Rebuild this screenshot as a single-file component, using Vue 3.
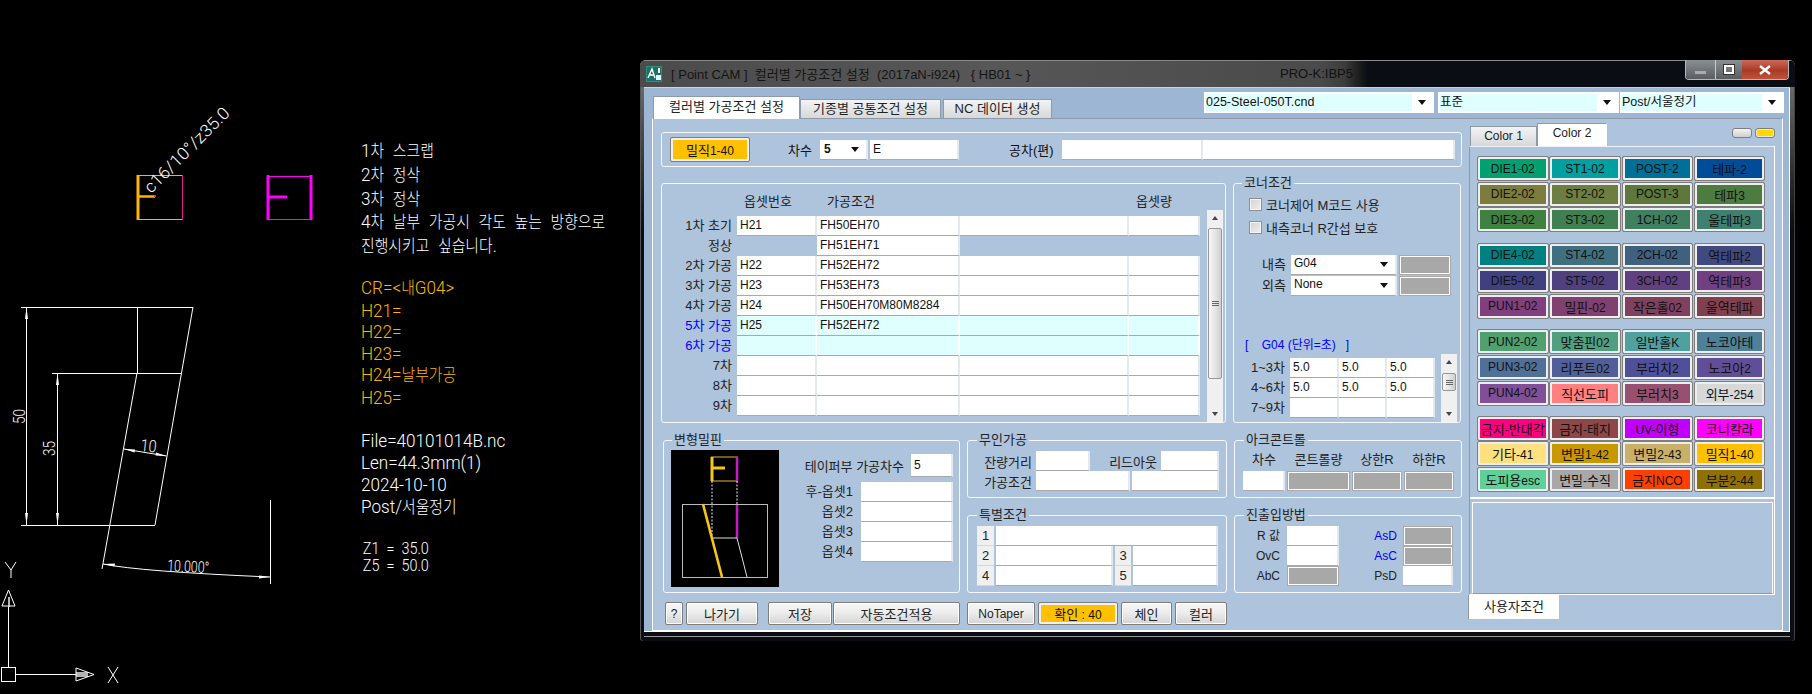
<template>
  <div class="desktop">
    <!-- CAD 도면 -->
    <svg class="cad" width="640" height="694" viewBox="0 0 640 694">
      <g fill="none" stroke="#ffb400">
        <path d="M137 175.500h45M137 219.500h45" />
        <path d="M138 175v45" stroke-width="3" />
        <path d="M137 196.500h18" stroke-width="2.500" />
      </g>
      <path d="M182.500 175v45" stroke="#e0208a" fill="none" />
      <rect x="154" y="195" width="2" height="2" fill="#ff2020" />
      <text class="cad-t" transform="translate(151 194) rotate(-45)" font-size="17" textLength="113" lengthAdjust="spacingAndGlyphs">c16/10°/z35.0</text>

      <g fill="none" stroke="#ff00ff">
        <path d="M267 176.500h45M267 219.500h45" />
        <path d="M268 175v45M311 175v45" stroke-width="3" />
        <path d="M267 197h20" stroke-width="3" />
      </g>

      <g fill="none" stroke="#fff">
        <path d="M21 307.500h172M137.500 307v66M52 373.500h129M21 525.500h134" />
        <path d="M193 307 155 525M137 373 102 569" />
        <path d="M26.500 307v218M57.500 373v152" />
        <path d="M124 449 166.500 456" />
        <path d="M103 564Q140 571.500 270 577" />
        <path d="M270.500 500v84" />
        <rect x="1.500" y="667.500" width="14" height="14" />
        <path d="M15.500 674.500H76M8.500 667V607" />
        <path d="M76 668v13l18-6.500zM2 606h13l-6.500-16z" />
        <path d="M108 667l10 16M118 667l-10 16M5 562l6 8 5-8M11 570v8" />
      </g>
      <g fill="#fff">
        <path d="M26.500 307 28 319h-3zM26.500 525 28 513h-3zM57.500 373 59 385h-3zM57.500 525 59 513h-3z" />
        <path d="M124 449l11 .5-.5 3zM166.500 456l-11-.5.500-3zM103 564l12-.5-.5 3zM270 577l-11 1.500v-3z" />
        <path d="M76 672h12v5H76zM8 607v-10h2v10z" opacity=".7" />
      </g>
      <text class="cad-t" transform="translate(25 424) rotate(-90) scale(.85 1)" font-size="16">50</text>
      <text class="cad-t" transform="translate(55 456) rotate(-90) scale(.85 1)" font-size="16">35</text>
      <text class="cad-t" transform="translate(140 451) rotate(6) scale(.85 1)" font-size="17">10</text>
      <text class="cad-t" transform="translate(167 571) rotate(3)" font-size="16" textLength="42" lengthAdjust="spacingAndGlyphs">10.000°</text>
    </svg>

    <div class="notes">
      <div class="note-block words">
        <div v-for="t in noteProcess" :key="t"><span v-for="(r, i) in runs(t)" :key="i" :class="{ ko: isKo(r) }">{{ r }}</span></div>
      </div>
      <div class="note-block orange">
        <div v-for="t in noteOffset" :key="t"><span v-for="(r, i) in runs(t)" :key="i" :class="{ ko: isKo(r) }">{{ r }}</span></div>
      </div>
      <div class="note-block file">
        <div v-for="t in noteFile" :key="t"><span v-for="(r, i) in runs(t)" :key="i" :class="{ ko: isKo(r) }">{{ r }}</span></div>
      </div>
      <div class="note-block small">
        <div>{{ noteZ1 }}</div>
        <div>{{ noteZ5 }}</div>
      </div>
    </div>

    <!-- 설정 창 -->
    <div class="window">
      <div class="titlebar">
        <svg class="app-icon" width="16" height="16" viewBox="0 0 16 16">
          <rect width="16" height="16" fill="#2f8f7f" />
          <rect x="1" y="1" width="14" height="14" fill="#1c6f66" />
          <path d="M2 12 6 3l3 9M4 9h4" fill="none" stroke="#fff" stroke-width="1.400" />
          <rect x="10" y="9" width="5" height="5" fill="#dff" />
          <rect x="12" y="2" width="2" height="5" fill="#fff" />
        </svg>
        <span class="title-text">{{ titleText }}</span>
        <span class="title-pro">PRO-K:IBP5</span>
        <div class="win-btns">
          <button class="win-btn min"><i></i></button>
          <button class="win-btn max"><i></i></button>
          <button class="win-btn close">
            <svg width="14" height="10" viewBox="0 0 14 10"><path d="M2 1l10 8M12 1 2 9" stroke="#fff" stroke-width="2.400" /></svg>
          </button>
        </div>
      </div>

      <div class="client">
        <div class="tabbar">
          <div class="tab active">컬러별 가공조건 설정</div>
          <div class="tab">기종별 공통조건 설정</div>
          <div class="tab third">NC 데이터 생성</div>
          <div class="top-combos">
            <div class="top-combo c1"><span>025-Steel-050T.cnd</span><i class="arrow"></i></div>
            <div class="top-combo c2"><span>표준</span><i class="arrow"></i></div>
            <div class="top-combo c3"><span>Post/서울정기</span><i class="arrow"></i></div>
          </div>
        </div>

        <div class="page">
          <div class="left">
            <div class="group top-group">
              <button class="btn amber pick"><span class="ko">밀직</span>1-40</button>
              <span class="tg-l1 ko">차수</span>
              <div class="cell combo tg-combo"><b>5</b><i class="arrow"></i></div>
              <div class="cell tg-e">E</div>
              <span class="tg-l2 ko">공차(편)</span>
              <div class="cell tg-a"></div>
              <div class="cell tg-b"></div>
            </div>

            <div class="mid-row">
              <div class="group main-group">
                <div class="table">
                  <div class="thead"><span></span><span>옵셋번호</span><span>가공조건</span><span></span><span>옵셋량</span></div>
                  <div v-for="r in rows" :key="r.label" class="trow" :class="{ hi: r.hi }">
                    <label :class="{ blue: r.hi }">{{ r.label }}</label>
                    <div :class="r.short ? 'gap' : 'cell'">{{ r.off }}</div>
                    <div class="cell">{{ r.cond }}</div>
                    <div :class="r.short ? 'gap' : 'cell'"></div>
                    <div :class="r.short ? 'gap' : 'cell'"></div>
                  </div>
                </div>
                <div class="vscroll big">
                  <i class="sb-up"></i>
                  <div class="sb-thumb"><i></i><i></i><i></i></div>
                  <i class="sb-down"></i>
                </div>
              </div>

              <div class="group corner-group">
                <span class="legend">코너조건</span>
                <div class="check first"><i></i>코너제어 M코드 사용</div>
                <div class="check"><i></i>내측코너 R간섭 보호</div>
                <div class="corner-sel">
                  <label>내측</label>
                  <div class="cell combo"><span>G04</span><i class="arrow"></i></div>
                  <div class="cell grey"></div>
                  <label>외측</label>
                  <div class="cell combo"><span>None</span><i class="arrow"></i></div>
                  <div class="cell grey"></div>
                </div>
                <div class="g04-cap">{{ g04Caption }}</div>
                <div class="g04">
                  <div class="g04-table">
                    <template v-for="g in g04" :key="g.label">
                      <label>{{ g.label }}</label>
                      <div v-for="(v, i) in g.vals" :key="i" class="cell">{{ v }}</div>
                    </template>
                  </div>
                  <div class="vscroll small">
                    <i class="sb-up"></i>
                    <div class="sb-thumb"><i></i><i></i><i></i></div>
                    <i class="sb-down"></i>
                  </div>
                </div>
              </div>
            </div>

            <div class="low-row">
              <div class="group deform">
                <span class="legend">변형밀핀</span>
                <svg class="thumb" width="108" height="137" viewBox="0 0 108 137">
                  <rect width="108" height="137" fill="#000" />
                  <path d="M40 7h27M40 31h27" stroke="#e8b23c" fill="none" />
                  <path d="M41 7v24M41 18h13" stroke="#f5c518" stroke-width="3" fill="none" />
                  <path d="M66 7v24M66 54v34" stroke="#c818c8" stroke-width="2.500" fill="none" />
                  <path d="M41 31v57M66 31v23" stroke="#eee" stroke-dasharray="2 1.500" fill="none" />
                  <rect x="11.500" y="54.500" width="85" height="73" fill="none" stroke="#bbb" />
                  <path d="M42 88h24M66 88l10 39" stroke="#ddd" fill="none" />
                  <path d="M32 54l19 73" stroke="#f5c518" stroke-width="2.600" fill="none" />
                </svg>
                <div class="deform-right">
                  <div class="taper"><label>테이퍼부 가공차수</label><div class="cell big-cell">5</div></div>
                  <div class="offsets">
                    <template v-for="o in deformOffsets" :key="o">
                      <label>{{ o }}</label>
                      <div class="cell"></div>
                    </template>
                  </div>
                </div>
              </div>

              <div class="low-col mid">
                <div class="group unmanned">
                  <span class="legend l9">무인가공</span>
                  <div class="um-row">
                    <label class="um-l">잔량거리</label>
                    <div class="cell w54"></div>
                    <label class="um-l2">리드아웃</label>
                    <div class="cell w58"></div>
                  </div>
                  <div class="um-row">
                    <label class="um-l">가공조건</label>
                    <div class="cell w94"></div>
                    <div class="cell w87"></div>
                  </div>
                </div>
                <div class="group special">
                  <span class="legend l9">특별조건</span>
                  <div class="sp-grid">
                    <div class="num">1</div><div class="cell span3"></div>
                    <div class="num">2</div><div class="cell"></div><div class="num">3</div><div class="cell"></div>
                    <div class="num">4</div><div class="cell"></div><div class="num">5</div><div class="cell"></div>
                  </div>
                </div>
              </div>

              <div class="low-col">
                <div class="group arc">
                  <span class="legend l9">아크콘트롤</span>
                  <div class="arc-grid">
                    <label>차수</label><label>콘트롤량</label><label>상한R</label><label>하한R</label>
                    <div class="cell"></div><div class="cell grey"></div><div class="cell grey"></div><div class="cell grey"></div>
                  </div>
                </div>
                <div class="group approach">
                  <span class="legend l9">진출입방법</span>
                  <div class="ap-grid">
                    <label>R 값</label><div class="cell"></div><label class="blue">AsD</label><div class="cell grey"></div>
                    <label>OvC</label><div class="cell"></div><label class="blue">AsC</label><div class="cell grey"></div>
                    <label>AbC</label><div class="cell grey"></div><label>PsD</label><div class="cell"></div>
                  </div>
                </div>
              </div>
            </div>

            <div class="bottom-btns">
              <button class="btn w18">?</button>
              <button class="btn w72 ko">나가기</button>
              <button class="btn w64 ml10 ko">저장</button>
              <button class="btn w127 ko">자동조건적용</button>
              <button class="btn w68 ml7">NoTaper</button>
              <button class="btn amber w80"><span class="ko">확인</span> : 40</button>
              <button class="btn w51 ko">체인</button>
              <button class="btn w52 ko">컬러</button>
            </div>
          </div>

          <div class="right">
            <div class="color-tabs">
              <div class="ctab">Color 1</div>
              <div class="ctab active">Color 2</div>
              <div class="mini-btns"><i class="mini"></i><i class="mini on"></i></div>
            </div>
            <div class="color-panel">
              <div class="color-area">
                <div v-for="(grp, gi) in colorGroups" :key="gi" class="color-grid">
                  <button v-for="c in grp" :key="c[0]" class="cbtn" :style="{ background: c[1] }"><span v-for="(r, i) in runs(c[0])" :key="i" :class="{ ko: isKo(r) }">{{ r }}</span></button>
                </div>
              </div>
              <div class="user-area"></div>
            </div>
            <div class="user-tab">사용자조건</div>
          </div>
        </div>
      </div>
    </div>
  </div>
</template>

<script setup>
// 한글만 글자 크기를 따로 주기 위해 나눈다
const runs = (t) => t.match(/[가-힣]+|[^가-힣]+/g) || [];
const isKo = (r) => /[가-힣]/.test(r);

const titleText = "[ Point CAM ]  컬러별 가공조건 설정  (2017aN-i924)   { HB01 ~ }";
const g04Caption = "[    G04 (단위=초)   ]";
const noteZ1 = "Z1  =  35.0";
const noteZ5 = "Z5  =  50.0";

const noteProcess = [
  "1차 스크랩",
  "2차 정삭",
  "3차 정삭",
  "4차 날부 가공시 각도 높는 방향으로",
  "진행시키고 싶습니다.",
];
const noteOffset = ["CR=<내G04>", "H21=", "H22=", "H23=", "H24=날부가공", "H25="];
const noteFile = ["File=40101014B.nc", "Len=44.3mm(1)", "2024-10-10", "Post/서울정기"];

const rows = [
  { label: "1차 초기", off: "H21", cond: "FH50EH70" },
  { label: "정상", off: "", cond: "FH51EH71", short: true },
  { label: "2차 가공", off: "H22", cond: "FH52EH72" },
  { label: "3차 가공", off: "H23", cond: "FH53EH73" },
  { label: "4차 가공", off: "H24", cond: "FH50EH70M80M8284" },
  { label: "5차 가공", off: "H25", cond: "FH52EH72", hi: true },
  { label: "6차 가공", off: "", cond: "", hi: true },
  { label: "7차", off: "", cond: "" },
  { label: "8차", off: "", cond: "" },
  { label: "9차", off: "", cond: "" },
];

const g04 = [
  { label: "1~3차", vals: ["5.0", "5.0", "5.0"] },
  { label: "4~6차", vals: ["5.0", "5.0", "5.0"] },
  { label: "7~9차", vals: ["", "", ""] },
];

const deformOffsets = ["후-옵셋1", "옵셋2", "옵셋3", "옵셋4"];

const colorGroups = [
  [
    ["DIE1-02", "#00a070"], ["ST1-02", "#00a0a0"], ["POST-2", "#007098"], ["테파-2", "#004c98"],
    ["DIE2-02", "#7c7c3c"], ["ST2-02", "#6e7e40"], ["POST-3", "#5e783c"], ["테파3", "#4e7c40"],
    ["DIE3-02", "#408040"], ["ST3-02", "#408050"], ["1CH-02", "#408060"], ["울테파3", "#408070"],
  ],
  [
    ["DIE4-02", "#008080"], ["ST4-02", "#407080"], ["2CH-02", "#406080"], ["역테파2", "#404a80"],
    ["DIE5-02", "#404080"], ["ST5-02", "#504080"], ["3CH-02", "#604080"], ["역테파3", "#704080"],
    ["PUN1-02", "#804080"], ["밀핀-02", "#804070"], ["작은홀02", "#804060"], ["울역테파", "#804050"],
  ],
  [
    ["PUN2-02", "#50a070"], ["맞춤핀02", "#50a080"], ["일반홀K", "#50a0a0"], ["노코아테", "#508098"],
    ["PUN3-02", "#507098"], ["리푸트02", "#505f98"], ["부러치2", "#50509a"], ["노코아2", "#604f98"],
    ["PUN4-02", "#804f98"], ["직선도피", "#ff8080"], ["부러치3", "#985070"], ["외부-254", "#d8d8d8"],
  ],
  [
    ["금지-반대각", "#ff0080"], ["금지-태지", "#8c4848"], ["UV-이형", "#c000ff"], ["코너칼라", "#ff00ff"],
    ["기타-41", "#ffe080"], ["변밀1-42", "#c89800"], ["변밀2-43", "#c8b068"], ["밀직1-40", "#ffc000"],
    ["도피용esc", "#60d098"], ["변밀-수직", "#a8a8a8"], ["금지NCO", "#ff4000"], ["부분2-44", "#907000"],
  ],
];
</script>

<style>
html,
body {
  margin: 0;
  background: #000;
}
</style>

<style scoped>
.desktop {
  position: relative;
  width: 1812px;
  height: 694px;
  overflow: hidden;
  background: #000;
  font-family: "Liberation Sans", "Noto Sans CJK KR", sans-serif;
  font-size: 12px;
  color: #111;
}
.ko {
  font-size: 13px;
}

/* cad */
.cad {
  position: absolute;
  left: 0;
  top: 0;
}
.cad-t {
  fill: #fff;
  font-family: Roboto, "Liberation Sans", sans-serif;
  font-weight: 300;
}
.notes {
  position: absolute;
  left: 361px;
  top: 140px;
  width: 320px;
  color: #fff;
  font-family: Roboto, "Noto Sans CJK KR", sans-serif;
  font-weight: 300;
  font-size: 19px;
  transform: scaleX(0.9);
  transform-origin: left top;
  white-space: pre;
}
.notes .ko {
  font-size: 16.500px;
}
.note-block {
  line-height: 23px;
  margin-bottom: 23px;
}
.note-block.words {
  word-spacing: 5px;
  line-height: 22.800px;
  margin-bottom: 18px;
}
.note-block.orange {
  color: #ffb400;
  line-height: 21.600px;
  margin-bottom: 21px;
}
.note-block.file {
  line-height: 22px;
  margin-bottom: 21px;
}
.note-block.small {
  font-size: 16px;
  line-height: 17px;
  padding-left: 2px;
}

/* window */
.window {
  position: absolute;
  left: 640px;
  top: 60px;
  width: 1155px;
  height: 581px;
  box-sizing: border-box;
  background: linear-gradient(#7c7c7c 0, #2a2a2a 120px, #0b0d12 170px);
  border-radius: 6px 6px 3px 3px;
  box-shadow: inset 0 1px 0 #8a8a8a, inset 1px 0 0 #555, inset -1px 0 0 #444;
}
.titlebar {
  position: relative;
  height: 27px;
  display: flex;
  align-items: center;
  padding-left: 6px;
  border-radius: 6px 6px 0 0;
  background: linear-gradient(90deg, #4b4b4b 0, #575757 30%, #4a4a4a 59%, #3c3c3c 61%, #222 62%, #0a0d14 63%) no-repeat;
  background-size: 100% calc(100% - 1px);
  background-position: 0 1px;
  font-size: 13px;
}
.app-icon {
  flex: none;
}
.title-text {
  flex: none;
  width: 351px;
  margin-left: 9px;
  white-space: pre;
  color: #141414;
}
.title-pro {
  flex: none;
  margin-left: 258px;
  color: #111;
  white-space: nowrap;
}
.win-btns {
  position: absolute;
  right: 6px;
  top: 0;
  display: flex;
  height: 19px;
  border: 1px solid #b4b8bc;
  border-top: 0;
  border-radius: 0 0 4px 4px;
  overflow: hidden;
}
.win-btn {
  padding: 0;
  border: 0;
  display: flex;
  align-items: center;
  justify-content: center;
}
.win-btn.min {
  width: 29px;
  background: linear-gradient(#8a8f94, #5a5e63);
}
.win-btn.min i {
  width: 11px;
  height: 3px;
  margin-top: 5px;
  background: #a8acb0;
}
.win-btn.max {
  width: 27px;
  border-left: 1px solid #ccc;
  background: linear-gradient(#8a8f94, #5a5e63);
}
.win-btn.max i {
  width: 6px;
  height: 5px;
  border: 2px solid #fff;
  outline: 1px solid #333;
}
.win-btn.close {
  width: 46px;
  background: linear-gradient(#cc6a58, #a93a26 55%, #c2533b);
}

.client {
  width: 1146px;
  height: 545px;
  margin-left: 4px;
  box-sizing: border-box;
  padding-left: 8px;
  padding-right: 7px;
  background: #9db6d3;
  border-top: 1px solid #c8d4e2;
  box-shadow: inset 0 -1px 0 #fff, inset -1px 0 0 #fff, 0 4px 0 #0b0d12, 0 5px 0 #999;
}
.tabbar {
  height: 30px;
  display: flex;
  align-items: flex-end;
  padding-left: 1px;
  position: relative;
}
.tab {
  box-sizing: border-box;
  width: 141px;
  height: 19px;
  margin-right: 1px;
  border: 1px solid #8e9aa8;
  border-bottom: 0;
  background: linear-gradient(#f2f3f4, #d6d8da);
  text-align: center;
  line-height: 18px;
  color: #222;
  font-size: 13px;
  white-space: nowrap;
}
.tab.active {
  width: 147px;
  height: 23px;
  margin-right: 0;
  margin-bottom: -1px;
  background: #fff;
  line-height: 19px;
  position: relative;
  z-index: 1;
}
.tab.third {
  width: 109px;
  margin-left: 1px;
}
.top-combos {
  margin-left: auto;
  margin-right: -1px;
  align-self: flex-start;
  margin-top: 4px;
  display: flex;
}
.top-combo {
  height: 21px;
  display: flex;
  align-items: center;
  background: #fff;
  padding: 0 2px;
  box-sizing: border-box;
  font-size: 12.500px;
}
.top-combo span {
  flex: 1;
  height: 17px;
  line-height: 17px;
  background: #dfffff;
  overflow: hidden;
  white-space: nowrap;
}
.top-combo .arrow {
  margin: 0 6px;
}
.top-combo.c1 {
  width: 230px;
  margin-right: 4px;
}
.top-combo.c2 {
  width: 181px;
  margin-right: 1px;
}
.top-combo.c3 {
  width: 164px;
}
.arrow {
  flex: none;
  width: 0;
  height: 0;
  border-left: 4px solid transparent;
  border-right: 4px solid transparent;
  border-top: 5px solid #111;
}

.page {
  box-sizing: border-box;
  height: 513px;
  display: grid;
  grid-template-columns: 801px 1fr;
  column-gap: 7px;
  padding-left: 8px;
  padding-top: 13px;
  background: #aec3dc;
  border: 1px solid #fff;
  border-top-color: #8e9aa8;
}
.left {
  min-width: 0;
}

/* groups */
.group {
  position: relative;
  box-sizing: border-box;
  border: 1px solid #f4f6fa;
  border-radius: 3px;
}
.legend {
  position: absolute;
  left: 8px;
  top: -8px;
  padding: 0 2px;
  background: #aec3dc;
  line-height: 14px;
  color: #222;
  font-size: 13px;
}
.legend.l9 {
  left: 9px;
}
label {
  color: #222;
  white-space: nowrap;
  text-align: right;
  font-size: 13px;
}
.blue {
  color: #0000ff;
}

.cell {
  box-sizing: border-box;
  height: 20px;
  line-height: 19px;
  padding-left: 3px;
  background: #fff;
  border-bottom: 1px solid #a9a9a9;
  border-right: 2px solid #e4e8ef;
  color: #111;
  overflow: hidden;
  white-space: nowrap;
}
.cell.grey {
  background: #a8a8a8;
  border: 1px solid #a9a9a9;
  box-shadow: inset 0 0 0 1px #fff;
}
.combo {
  display: flex;
  align-items: center;
  justify-content: space-between;
  padding-right: 7px;
  line-height: 17px;
}
.combo span {
  margin-top: -3px;
}

/* buttons */
.btn {
  box-sizing: border-box;
  height: 23px;
  padding: 0;
  border: 1px solid #7e7e7e;
  border-radius: 2px;
  background: linear-gradient(#f6f6f6, #ededed 45%, #d4d4d4);
  box-shadow: inset 0 0 0 1px #fff;
  font-family: inherit;
  font-size: 12px;
  color: #222;
}
.btn.ko {
  font-size: 13px;
}
.btn.amber {
  background: #ffc000;
  box-shadow: inset 0 0 0 2px #eef0f2;
  color: #111;
}
.w18 { width: 18px; margin-right: 3px; }
.w72 { width: 72px; }
.w64 { width: 64px; margin-right: 1px; }
.w127 { width: 127px; }
.w68 { width: 68px; margin-right: 3px; }
.w80 { width: 80px; margin-right: 3px; }
.w51 { width: 51px; margin-right: 3px; }
.w52 { width: 52px; }
.ml10 { margin-left: 10px; }
.ml7 { margin-left: 7px; }
.bottom-btns {
  display: flex;
  margin-top: 9px;
  margin-left: 4px;
}

/* top group */
.top-group {
  height: 35px;
  display: flex;
  align-items: center;
  padding-left: 8px;
}
.pick {
  width: 80px;
  height: 25px;
}
.tg-l1 {
  margin-left: 38px;
  width: 24px;
  margin-right: 8px;
  white-space: nowrap;
}
.tg-combo {
  width: 48px;
  margin-right: 2px;
  padding-left: 4px;
}
.tg-e {
  width: 89px;
}
.tg-l2 {
  margin-left: 50px;
  width: 43px;
  margin-right: 10px;
  white-space: nowrap;
}
.tg-a {
  width: 141px;
}
.tg-b {
  width: 252px;
}

/* main table */
.mid-row {
  display: flex;
  gap: 7px;
  margin-top: 16px;
}
.main-group {
  width: 565px;
  height: 240px;
  display: flex;
}
.table {
  width: 538px;
  margin-right: 7px;
}
.thead,
.trow {
  display: grid;
  grid-template-columns: 75px 80px 143px 169px 71px;
}
.thead {
  height: 32px;
  align-items: end;
  padding-bottom: 6px;
  box-sizing: border-box;
  color: #222;
  font-size: 13px;
}
.thead span:nth-child(2) {
  padding-left: 7px;
}
.thead span:nth-child(3) {
  padding-left: 10px;
}
.thead span:nth-child(5) {
  padding-left: 7px;
}
.trow label {
  padding-right: 5px;
  line-height: 20px;
}
.trow.hi .cell {
  background: #dfffff;
  border-right-color: #fff;
}
.gap {
  height: 20px;
}
.vscroll {
  flex: none;
  width: 16px;
  display: flex;
  flex-direction: column;
  align-items: center;
  background: #f0f0f0;
}
.vscroll.big {
  margin-top: 26px;
  height: 212px;
}
.vscroll.small {
  height: 68px;
}
.sb-up,
.sb-down {
  flex: none;
  width: 0;
  height: 0;
  border-left: 3px solid transparent;
  border-right: 3px solid transparent;
}
.sb-up {
  margin-top: 6px;
  border-bottom: 4px solid #444;
}
.sb-down {
  margin-top: auto;
  margin-bottom: 6px;
  border-top: 4px solid #444;
}
.sb-thumb {
  box-sizing: border-box;
  width: 14px;
  margin-top: 8px;
  display: flex;
  flex-direction: column;
  align-items: center;
  justify-content: center;
  gap: 1px;
  border: 1px solid #979797;
  border-radius: 2px;
  background: linear-gradient(90deg, #f6f6f6, #e6e6e6 50%, #cfcfcf);
}
.big .sb-thumb {
  height: 151px;
}
.small .sb-thumb {
  height: 18px;
  margin-top: 9px;
}
.sb-thumb i {
  width: 7px;
  height: 1px;
  background: #666;
}

/* corner */
.corner-group {
  width: 228px;
  height: 240px;
  padding-top: 14px;
}
.check {
  display: flex;
  align-items: center;
  gap: 4px;
  height: 13px;
  margin-left: 15px;
  margin-bottom: 10px;
  color: #222;
  font-size: 13px;
  white-space: nowrap;
}
.check i {
  box-sizing: border-box;
  width: 13px;
  height: 13px;
  border: 1px solid #8e8f8f;
  box-shadow: inset 0 0 0 1px #f4f4f4;
  background: linear-gradient(135deg, #d2d2d2, #f0f0f0);
}
.corner-sel {
  display: grid;
  grid-template-columns: 52px 106px 55px;
  column-gap: 2px;
  grid-template-rows: 21px 20px;
  margin-top: 21px;
}
.corner-sel > .cell:nth-child(2),
.corner-sel > .cell:nth-child(5) {
  margin-left: 3px;
  width: 106px;
}
.corner-sel .grey {
  margin-left: 3px;
}
.corner-sel label {
  line-height: 20px;
}
.g04-cap {
  margin-top: 42px;
  margin-left: 11px;
  line-height: 14px;
  color: #0000ff;
  white-space: pre;
}
.g04 {
  display: flex;
  margin-top: 2px;
}
.g04-table {
  display: grid;
  grid-template-columns: 56px 49px 48px 48px;
  grid-auto-rows: 20px;
  width: 207px;
  margin-top: 4px;
}
.g04-table label {
  line-height: 20px;
  padding-right: 5px;
}

/* low row */
.low-row {
  display: flex;
  margin-top: 17px;
  padding-left: 2px;
}
.deform {
  width: 297px;
  height: 153px;
  display: flex;
  padding: 9px 6px 0 7px;
  margin-right: 7px;
}
.thumb {
  flex: none;
}
.deform-right {
  flex: 1;
  padding-top: 4px;
}
.taper {
  display: flex;
  justify-content: flex-end;
  align-items: center;
  gap: 7px;
}
.big-cell {
  width: 42px;
  height: 23px;
  line-height: 22px;
}
.offsets {
  margin-top: 5px;
  display: grid;
  grid-template-columns: 74px 92px;
  column-gap: 8px;
  grid-auto-rows: 20px;
}
.offsets label {
  line-height: 20px;
}
.low-col {
  display: flex;
  flex-direction: column;
  gap: 17px;
  width: 228px;
}
.low-col.mid {
  width: 260px;
  margin-right: 7px;
}
.unmanned,
.arc {
  height: 58px;
  padding-top: 10px;
}
.special,
.approach {
  height: 78px;
  padding-top: 10px;
}
.um-row {
  display: flex;
  height: 20px;
  align-items: center;
}
.um-l {
  width: 64px;
  margin-right: 4px;
}
.um-l2 {
  width: 67px;
  margin-right: 4px;
}
.w54 { width: 54px; }
.w58 { width: 58px; }
.w94 { width: 94px; margin-right: 2px; }
.w87 { width: 87px; }
.sp-grid {
  display: grid;
  grid-template-columns: 17px 117px 16px 85px;
  column-gap: 2px;
  grid-auto-rows: 20px;
  padding-left: 9px;
}
.num {
  background: #f0f0f0;
  text-align: center;
  line-height: 20px;
  border-bottom: 1px solid #d8d8d8;
  box-sizing: border-box;
  font-size: 13px;
  color: #222;
}
.span3 {
  grid-column: span 3;
}
.arc-grid {
  display: grid;
  grid-template-columns: 42px 63px 50px 50px;
  column-gap: 2px;
  grid-auto-rows: 20px;
  padding-left: 8px;
}
.arc-grid label {
  text-align: center;
  line-height: 18px;
}
.ap-grid {
  display: grid;
  grid-template-columns: 45px 59px 58px 56px;
  grid-auto-rows: 20px;
}
.ap-grid label {
  line-height: 20px;
  font-size: 12px;
}
.ap-grid > :nth-child(4n + 2) {
  margin-left: 7px;
}
.ap-grid > :nth-child(4n) {
  margin-left: 6px;
}

/* right */
.right {
  min-width: 0;
  margin-top: -9px;
}
.color-tabs {
  height: 23px;
  display: flex;
  align-items: flex-end;
  padding-left: 1px;
}
.ctab {
  box-sizing: border-box;
  width: 67px;
  height: 20px;
  text-align: center;
  line-height: 19px;
  border: 1px solid #8e9aa8;
  border-bottom: 0;
  background: linear-gradient(#f2f3f4, #d6d8da);
  color: #222;
}
.ctab.active {
  width: 70px;
  height: 23px;
  background: #fff;
  line-height: 18px;
  border-right-color: #fff;
}
.mini-btns {
  display: flex;
  gap: 3px;
  margin-left: auto;
  margin-right: 7px;
  margin-bottom: 8px;
}
.mini {
  box-sizing: border-box;
  width: 20px;
  height: 10px;
  border: 1px solid #7e7e7e;
  border-radius: 3px;
  background: linear-gradient(#f4f4f4, #cfcfcf);
}
.mini.on {
  background: #ffd800;
  box-shadow: inset 0 0 0 1px #e8e8e8;
}
.color-panel {
  box-sizing: border-box;
  width: 306px;
  height: 449px;
  display: flex;
  flex-direction: column;
  border: 1px solid #fff;
  border-left-color: #8e9aa8;
  border-top-color: #eef2f8;
}
.color-area {
  height: 352px;
  box-sizing: border-box;
  padding: 9px 0 0 7px;
  border-bottom: 2px solid #fff;
}
.color-grid {
  display: grid;
  grid-template-columns: repeat(4, 71.500px);
  column-gap: 0.800px;
  grid-auto-rows: 25px;
  row-gap: 0.670px;
  margin-bottom: 10.300px;
}
.cbtn {
  padding: 0;
  border: 1px solid #7e7e7e;
  border-radius: 2px;
  box-shadow: inset 0 0 0 2px #eceef0;
  font-family: inherit;
  font-size: 12px;
  color: #111;
  white-space: nowrap;
  overflow: hidden;
}
.user-area {
  flex: 1;
  margin: 3px 1px 0 2px;
  border: 1px solid #fff;
  border-bottom-color: #8e9aa8;
}
.user-tab {
  box-sizing: border-box;
  width: 91px;
  height: 24px;
  margin-left: -1px;
  background: #fff;
  border-left: 1px solid #8e9aa8;
  text-align: center;
  line-height: 24px;
  color: #222;
  font-size: 13px;
}
</style>
